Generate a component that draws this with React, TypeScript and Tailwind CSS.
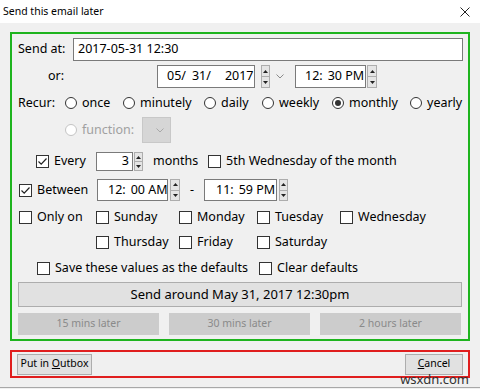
import React from "react";

function Spin({ className }: { className: string }) {
  return (
    <div className={"flex flex-col h-full shrink-0 border border-[#adadad] bg-[#e5e5e5] " + className}>
      <div className="flex-1 flex items-center justify-center border-b border-[#adadad]">
        <svg width="5" height="3" viewBox="0 0 5 3">
          <path d="M0 3 L2.5 0 L5 3 Z" fill="#222" />
        </svg>
      </div>
      <div className="flex-1 flex items-center justify-center">
        <svg width="5" height="3" viewBox="0 0 5 3">
          <path d="M0 0 L2.5 3 L5 0 Z" fill="#222" />
        </svg>
      </div>
    </div>
  );
}

function Radio({
  label,
  checked = false,
  disabled = false,
  className = "",
}: {
  label: string;
  checked?: boolean;
  disabled?: boolean;
  className?: string;
}) {
  return (
    <div className={"flex shrink-0 items-center gap-[5px] whitespace-nowrap " + className}>
      <span
        className={
          "w-[12px] h-[12px] shrink-0 rounded-full border bg-white flex items-center justify-center " +
          (disabled ? "border-[#c4c4c4]" : "border-[#333]")
        }
      >
        {checked && <span className="w-[6px] h-[6px] rounded-full bg-[#333]" />}
      </span>
      <span className={disabled ? "text-[#a0a0a0]" : "text-black"}>{label}</span>
    </div>
  );
}

function Check({
  label,
  checked = false,
  className = "",
}: {
  label: string;
  checked?: boolean;
  className?: string;
}) {
  return (
    <div className={"flex shrink-0 items-center gap-[5px] whitespace-nowrap " + className}>
      <span className="w-[13px] h-[13px] shrink-0 border border-[#333] bg-white flex items-center justify-center">
        {checked && (
          <svg width="11" height="11" viewBox="0 0 11 11">
            <path d="M1.5 5.5 L4.2 8.2 L9.5 2.5" stroke="#222" strokeWidth="1.2" fill="none" />
          </svg>
        )}
      </span>
      <span>{label}</span>
    </div>
  );
}

function Field({ className, children }: { className: string; children: React.ReactNode }) {
  return (
    <div className={"h-full shrink-0 border border-[#7a7a7a] bg-white flex items-center whitespace-pre " + className}>
      {children}
    </div>
  );
}

export default function App() {
  return (
    <div className="relative w-[480px] h-[389px] bg-[#f0f0f0] font-['Segoe_UI','Noto_Sans',sans-serif] text-[12.5px] text-black overflow-hidden">
      {/* Title bar */}
      <div className="h-[23px] bg-white flex items-center justify-between pl-[3px] pr-[10px]">
        <span className="text-[10.5px]">Send this email later</span>
        <svg width="10" height="10" viewBox="0 0 10 10">
          <path d="M0.5 0.5 L9.5 9.5 M9.5 0.5 L0.5 9.5" stroke="#222" strokeWidth="1" />
        </svg>
      </div>

      {/* Scheduling options */}
      <div className="ml-[10px] mt-[9px] w-[460px] h-[309px] border-2 border-[#1eb41e] flex flex-col">
        <div className="mt-[4px] h-[23px] flex items-center">
          <span className="pl-[6px] w-[61px] shrink-0">Send at:</span>
          <Field className="w-[390px] pl-[4px]">2017-05-31 12:30</Field>
        </div>

        <div className="mt-[4px] h-[23px] flex items-center">
          <span className="pl-[36px] w-[145px] shrink-0">or:</span>
          <Field className="w-[98px] pl-[9px]">
            <span>05/</span>
            <span className="ml-[6px]">31/</span>
            <span className="ml-[14px]">2017</span>
          </Field>
          <Spin className="ml-[6px] w-[9px]" />
          <svg className="ml-[6px]" width="8" height="5" viewBox="0 0 8 5">
            <path d="M0.5 0.5 L4 4 L7.5 0.5" stroke="#8a8a8a" fill="none" />
          </svg>
          <Field className="ml-[11px] w-[71px] pl-[9px]">
            <span>12:</span>
            <span className="ml-[5px]">30 PM</span>
          </Field>
          <Spin className="ml-[1px] w-[10px]" />
        </div>

        <div className="mt-[3px] h-[24px] flex items-center">
          <span className="pl-[6px] w-[53px] shrink-0">Recur:</span>
          <Radio label="once" className="w-[58px]" />
          <Radio label="minutely" className="w-[81px]" />
          <Radio label="daily" className="w-[58px]" />
          <Radio label="weekly" className="w-[70px]" />
          <Radio label="monthly" checked className="w-[78px]" />
          <Radio label="yearly" />
        </div>

        <div className="mt-[2px] h-[26px] flex items-center pl-[53px]">
          <Radio label="function:" disabled className="w-[77px]" />
          <div className="w-[29px] h-full bg-[#d6d6d6] border border-[#c8c8c8] flex items-center justify-end pr-[6px]">
            <svg width="8" height="5" viewBox="0 0 8 5">
              <path d="M0.5 0.5 L4 4 L7.5 0.5" stroke="#a8a8a8" fill="none" />
            </svg>
          </div>
        </div>

        <div className="mt-[9px] h-[19px] flex items-center pl-[24px]">
          <Check label="Every" checked className="w-[60px]" />
          <Field className="w-[37px] justify-end pr-[3px]">3</Field>
          <Spin className="ml-[1px] w-[9px]" />
          <span className="ml-[10px] w-[55px] shrink-0">months</span>
          <Check label="5th Wednesday of the month" />
        </div>

        <div className="mt-[8px] h-[22px] flex items-center pl-[7px]">
          <Check label="Between" checked className="w-[78px]" />
          <Field className="w-[71px] pl-[10px]">
            <span>12:</span>
            <span className="ml-[5px]">00 AM</span>
          </Field>
          <Spin className="ml-[2px] w-[10px]" />
          <span className="w-[24px] shrink-0 text-center">-</span>
          <Field className="w-[73px] pl-[11px]">
            <span>11:</span>
            <span className="ml-[5px]">59 PM</span>
          </Field>
          <Spin className="ml-[2px] w-[9px]" />
        </div>

        <div className="mt-[5px] h-[22px] flex items-center pl-[7px]">
          <Check label="Only on" className="w-[77px]" />
          <Check label="Sunday" className="w-[83px]" />
          <Check label="Monday" className="w-[78px]" />
          <Check label="Tuesday" className="w-[83px]" />
          <Check label="Wednesday" />
        </div>

        <div className="mt-[3px] h-[22px] flex items-center pl-[84px]">
          <Check label="Thursday" className="w-[83px]" />
          <Check label="Friday" className="w-[78px]" />
          <Check label="Saturday" />
        </div>

        <div className="mt-[4px] h-[22px] flex items-center pl-[25px]">
          <Check label="Save these values as the defaults" className="w-[222px]" />
          <Check label="Clear defaults" />
        </div>

        <button className="mt-[3px] ml-[6px] w-[444px] h-[25px] bg-[#e1e1e1] border border-[#adadad] text-[13px] flex items-center justify-center">
          Send around May 31, 2017 12:30pm
        </button>

        <div className="mt-[6px] ml-[6px] h-[22px] flex gap-[10px] text-[10.5px] text-[#8a8a8a]">
          <div className="w-[141px] bg-[#cccccc] flex items-center justify-center">15 mins later</div>
          <div className="w-[141px] bg-[#cccccc] flex items-center justify-center">30 mins later</div>
          <div className="w-[141px] bg-[#cccccc] flex items-center justify-center">2 hours later</div>
        </div>
      </div>

      {/* Dialog buttons */}
      <div className="mt-[9px] ml-[10px] w-[460px] h-[28px] border-2 border-[#e01e1e] flex items-center justify-between px-[5px] text-[10.5px]">
        <button className="w-[75px] h-[21px] bg-[#e1e1e1] border border-[#adadad] flex items-center justify-center whitespace-nowrap">
          <span>
            Put in <span className="underline">O</span>utbox
          </span>
        </button>
        <button className="w-[58px] h-[21px] bg-[#e1e1e1] border border-[#adadad] flex items-center justify-center whitespace-nowrap">
          <span>
            <span className="underline">C</span>ancel
          </span>
        </button>
      </div>

      <div className="mt-[9px] h-px bg-[#a8a8a8]" />

      <span className="absolute right-[11px] bottom-[3px] text-[13px] text-[#333] leading-none">wsxdn.com</span>
    </div>
  );
}
